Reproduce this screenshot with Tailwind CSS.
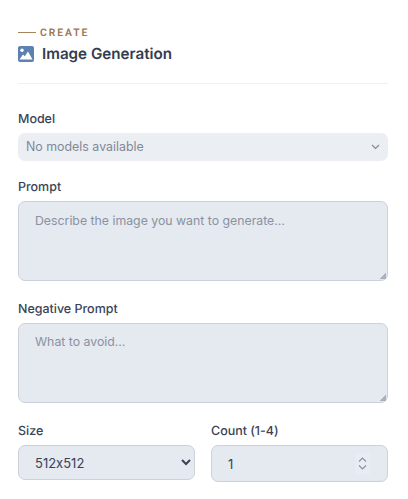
<!DOCTYPE html>
<html lang="en">
<head>
<meta charset="utf-8">
<script src="https://cdn.jsdelivr.net/npm/@tailwindcss/browser@4"></script>
</head>
<body class="bg-white font-['Inter',sans-serif] overflow-hidden [text-rendering:geometricPrecision] [font-feature-settings:'calt'_0]">
<div class="w-[408px] h-[499px] pl-[18px] pr-[20px] pt-[26px] overflow-hidden">
  <header class="h-[58px] border-b border-[#f0f1f4]">
    <div class="flex items-center gap-[4px] h-[12px]">
      <span class="w-[18px] h-px bg-[#a8835f]"></span>
      <span class="relative top-px text-[10.4px] leading-[12px] font-semibold tracking-[1.9px] text-[#a0764c] font-['Roboto',sans-serif]">CREATE</span>
    </div>
    <div class="flex items-center gap-[8px] mt-[5px]">
      <svg width="16" height="16" viewBox="0 0 16 16"><rect width="16" height="16" rx="2" fill="#5d82b1"/><circle cx="4" cy="4.3" r="1.7" fill="#fff"/><path d="M1.5 13.5 5 8.5l1.8 1.8L10 5.5l4.5 8z" fill="#fff"/></svg>
      <h1 class="text-[15.2px] leading-[22px] font-semibold text-[#333c4e]">Image Generation</h1>
    </div>
  </header>
  <form class="mt-[25px] pt-[2px]">
    <label class="block text-[12.48px] leading-[18px] font-medium text-[#3a4356]">Model</label>
    <div class="relative mt-[4px]">
      <select disabled class="block w-full h-[28px] appearance-none rounded-[7px] bg-[#ebeef3] pl-[8px] text-[12.4px] text-[#828997] opacity-100"><option>No models available</option></select>
      <svg class="absolute right-[8px] top-[11px]" width="9" height="6" viewBox="0 0 9 6" fill="none" stroke="#7f8795" stroke-width="1.1"><path d="M1 1l3.5 3.5L8 1"/></svg>
    </div>
    <label class="block mt-[18px] text-[12.48px] leading-[18px] font-medium text-[#3a4356]">Prompt</label>
    <textarea class="block mt-[4px] w-full h-[80px] rounded-[7px] border border-[#ccd1db] bg-[#e5e9f0] px-[16px] pt-[11px] text-[12.3px] leading-[16px] placeholder:text-[#8a92a0] [&::-webkit-resizer]:bg-[linear-gradient(135deg,transparent_55%,#aab0bd_55%)] [&::-webkit-resizer]:bg-no-repeat [&::-webkit-resizer]:bg-[position:right_1px_bottom_1px] [&::-webkit-resizer]:bg-[length:7px_7px]" placeholder="Describe the image you want to generate…"></textarea>
    <label class="block mt-[20px] text-[12.48px] leading-[18px] font-medium text-[#3a4356]">Negative Prompt</label>
    <textarea class="block mt-[4px] w-full h-[80px] rounded-[7px] border border-[#ccd1db] bg-[#e5e9f0] px-[16px] pt-[10px] text-[12.3px] leading-[16px] placeholder:text-[#8a92a0] [&::-webkit-resizer]:bg-[linear-gradient(135deg,transparent_55%,#aab0bd_55%)] [&::-webkit-resizer]:bg-no-repeat [&::-webkit-resizer]:bg-[position:right_1px_bottom_1px] [&::-webkit-resizer]:bg-[length:7px_7px]" placeholder="What to avoid…"></textarea>
    <div class="grid grid-cols-2 gap-[16px] mt-[20px]">
      <div>
        <label class="block text-[12.48px] leading-[18px] font-medium text-[#3a4356]">Size</label>
        <select class="block mt-[4px] w-full h-[35px] rounded-[7px] border border-[#ccd1db] bg-[#e5e9f0] pl-[12px] pr-[4px] text-[13px] text-[#3a4356]"><option>512x512</option></select>
      </div>
      <div>
        <label class="block text-[12.48px] leading-[18px] font-medium text-[#3a4356]">Count (1-4)</label>
        <div class="relative mt-[4px]">
          <input type="number" value="1" min="1" max="4" class="block w-full h-[37px] rounded-[7px] border border-[#ccd1db] bg-[#e5e9f0] px-[16px] text-[13px] text-[#3a4356] appearance-none [&::-webkit-inner-spin-button]:appearance-none">
          <span class="absolute right-[18px] top-[8px] flex h-[21px] w-[15px] items-center justify-center bg-[#e9ecf2]">
            <svg width="9" height="13" viewBox="0 0 9 13" fill="none" stroke="#8a92a0" stroke-width="1.1"><path d="M1 4.5l3.5-3.5L8 4.5M1 8.5L4.5 12 8 8.5"/></svg>
          </span>
        </div>
      </div>
    </div>
  </form>
</div>
</body>
</html>
